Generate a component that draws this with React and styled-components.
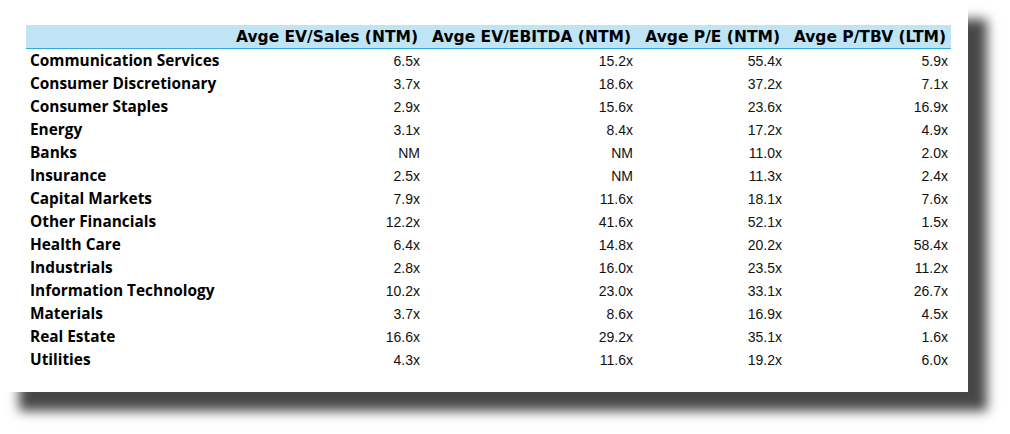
import styled, { createGlobalStyle } from "styled-components";

const GlobalStyle = createGlobalStyle`
  body {
    margin: 0;
    background: #ffffff;
  }
`;

const Page = styled.div`
  width: 1010px;
  height: 434px;
  background: #ffffff;
`;

const Card = styled.div`
  width: 968px;
  height: 392px;
  box-sizing: border-box;
  padding: 25px 17px 0 26px;
  background: #ffffff;
  box-shadow: 19px 19px 11px rgba(0, 0, 0, 0.72);
`;

const Grid = styled.div`
  display: grid;
  grid-template-columns: 200px 197px 213px 149px 166px;
`;

const HeadCell = styled.div`
  height: 23px;
  display: flex;
  align-items: center;
  justify-content: flex-end;
  padding-right: 5px;
  background: #bfe4f4;
  border-bottom: 1px solid #3aa8e0;
  font-family: "DejaVu Sans", Verdana, sans-serif;
  font-weight: bold;
  font-size: 15.5px;
  color: #000000;
  white-space: nowrap;
`;

const Label = styled.div`
  height: 23px;
  display: flex;
  align-items: center;
  padding-left: 4px;
  font-family: "Open Sans", "Noto Sans", sans-serif;
  font-weight: 700;
  font-size: 15.4px;
  color: #000000;
  white-space: nowrap;
`;

const Value = styled.div`
  height: 23px;
  display: flex;
  align-items: center;
  justify-content: flex-end;
  padding-right: 3px;
  font-family: "Liberation Sans", Arial, sans-serif;
  font-size: 14px;
  color: #111111;
`;

const headers = [
  "Avge EV/Sales (NTM)",
  "Avge EV/EBITDA (NTM)",
  "Avge P/E (NTM)",
  "Avge P/TBV (LTM)",
];

const rows = [
  ["Communication Services", "6.5x", "15.2x", "55.4x", "5.9x"],
  ["Consumer Discretionary", "3.7x", "18.6x", "37.2x", "7.1x"],
  ["Consumer Staples", "2.9x", "15.6x", "23.6x", "16.9x"],
  ["Energy", "3.1x", "8.4x", "17.2x", "4.9x"],
  ["Banks", "NM", "NM", "11.0x", "2.0x"],
  ["Insurance", "2.5x", "NM", "11.3x", "2.4x"],
  ["Capital Markets", "7.9x", "11.6x", "18.1x", "7.6x"],
  ["Other Financials", "12.2x", "41.6x", "52.1x", "1.5x"],
  ["Health Care", "6.4x", "14.8x", "20.2x", "58.4x"],
  ["Industrials", "2.8x", "16.0x", "23.5x", "11.2x"],
  ["Information Technology", "10.2x", "23.0x", "33.1x", "26.7x"],
  ["Materials", "3.7x", "8.6x", "16.9x", "4.5x"],
  ["Real Estate", "16.6x", "29.2x", "35.1x", "1.6x"],
  ["Utilities", "4.3x", "11.6x", "19.2x", "6.0x"],
];

const App = () => {
  return (
    <Page>
      <GlobalStyle />
      <Card>
        <Grid>
          <HeadCell />
          {headers.map((h) => (
            <HeadCell key={h}>{h}</HeadCell>
          ))}
          {rows.map(([name, ...vals]) => [
            <Label key={name}>{name}</Label>,
            ...vals.map((v, i) => <Value key={name + i}>{v}</Value>),
          ])}
        </Grid>
      </Card>
    </Page>
  );
};

export default App;
